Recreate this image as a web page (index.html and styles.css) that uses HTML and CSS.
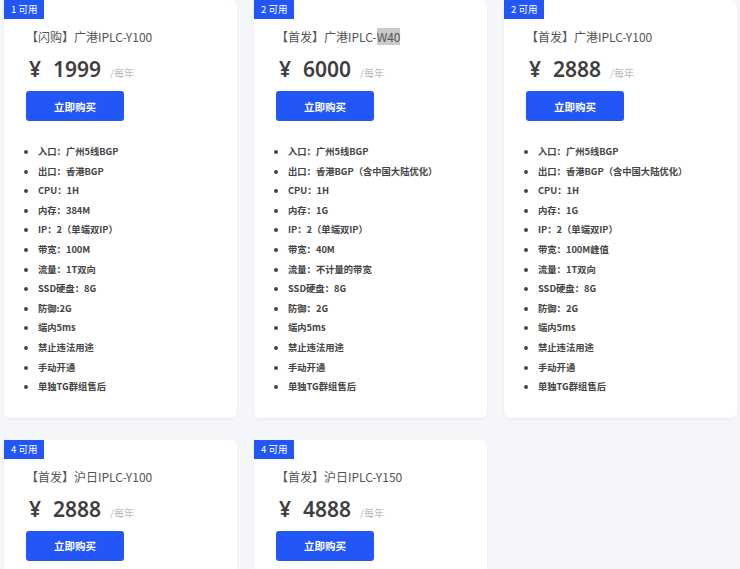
FILE: index.html
```html
<!DOCTYPE html>
<html lang="zh-CN">
<head>
    <meta charset="UTF-8">
    <meta name="viewport" content="width=device-width, initial-scale=1.0">
    <title>IPLC 套餐</title>
    <link rel="stylesheet" href="styles.css">
</head>
<body>

<!-- 套餐列表 -->
<div class="plans">

    <div class="card">
        <span class="badge">1 可用</span>
        <h3 class="plan-title">【闪购】广港IPLC-Y100</h3>
        <div class="price"><span class="yen">¥</span>1999<span class="period">/每年</span></div>
        <button class="buy-btn">立即购买</button>
        <ul class="specs">
            <li>入口：广州5线BGP</li>
            <li>出口：香港BGP</li>
            <li>CPU：1H</li>
            <li>内存：384M</li>
            <li>IP：2（单端双IP）</li>
            <li>带宽：100M</li>
            <li>流量：1T双向</li>
            <li>SSD硬盘：8G</li>
            <li>防御:2G</li>
            <li>端内5ms</li>
            <li>禁止违法用途</li>
            <li>手动开通</li>
            <li>单独TG群组售后</li>
        </ul>
    </div>

    <div class="card">
        <span class="badge">2 可用</span>
        <h3 class="plan-title">【首发】广港IPLC-<span class="selected">W40</span></h3>
        <div class="price"><span class="yen">¥</span>6000<span class="period">/每年</span></div>
        <button class="buy-btn">立即购买</button>
        <ul class="specs">
            <li>入口：广州5线BGP</li>
            <li>出口：香港BGP（含中国大陆优化）</li>
            <li>CPU：1H</li>
            <li>内存：1G</li>
            <li>IP：2（单端双IP）</li>
            <li>带宽：40M</li>
            <li>流量：不计量的带宽</li>
            <li>SSD硬盘：8G</li>
            <li>防御：2G</li>
            <li>端内5ms</li>
            <li>禁止违法用途</li>
            <li>手动开通</li>
            <li>单独TG群组售后</li>
        </ul>
    </div>

    <div class="card">
        <span class="badge">2 可用</span>
        <h3 class="plan-title">【首发】广港IPLC-Y100</h3>
        <div class="price"><span class="yen">¥</span>2888<span class="period">/每年</span></div>
        <button class="buy-btn">立即购买</button>
        <ul class="specs">
            <li>入口：广州5线BGP</li>
            <li>出口：香港BGP（含中国大陆优化）</li>
            <li>CPU：1H</li>
            <li>内存：1G</li>
            <li>IP：2（单端双IP）</li>
            <li>带宽：100M峰值</li>
            <li>流量：1T双向</li>
            <li>SSD硬盘：8G</li>
            <li>防御：2G</li>
            <li>端内5ms</li>
            <li>禁止违法用途</li>
            <li>手动开通</li>
            <li>单独TG群组售后</li>
        </ul>
    </div>

    <div class="card">
        <span class="badge">4 可用</span>
        <h3 class="plan-title">【首发】沪日IPLC-Y100</h3>
        <div class="price"><span class="yen">¥</span>2888<span class="period">/每年</span></div>
        <button class="buy-btn">立即购买</button>
        <ul class="specs">
            <li>入口：上海BGP</li>
            <li>出口：日本BGP</li>
            <li>CPU：1H</li>
            <li>内存：1G</li>
        </ul>
    </div>

    <div class="card">
        <span class="badge">4 可用</span>
        <h3 class="plan-title">【首发】沪日IPLC-Y150</h3>
        <div class="price"><span class="yen">¥</span>4888<span class="period">/每年</span></div>
        <button class="buy-btn">立即购买</button>
        <ul class="specs">
            <li>入口：上海BGP</li>
            <li>出口：日本BGP</li>
            <li>CPU：1H</li>
            <li>内存：1G</li>
        </ul>
    </div>

</div>

</body>
</html>
```

FILE: styles.css
```css
body {
    font-family: "Noto Sans CJK SC", sans-serif;
    background-color: #f5f6f9;
    color: #444;
    margin: 0;
    padding: 0;
}

.plans {
    display: grid;
    grid-template-columns: repeat(3, 233px);
    column-gap: 17px;
    row-gap: 22px;
    padding: 0 3px 0 4px;
}

.card {
    position: relative;
    background-color: #fff;
    border-radius: 6px;
    box-shadow: 0 1px 3px rgba(0, 0, 0, 0.05);
    padding: 29px 20px 21px 22px;
}

.badge {
    position: absolute;
    top: 0;
    left: 0;
    height: 19px;
    line-height: 19px;
    padding: 0 7px;
    background-color: #2356f6;
    color: white;
    font-size: 9.5px;
}

.plan-title {
    margin: 0;
    height: 16px;
    font-size: 12px;
    line-height: 16px;
    font-weight: normal;
    color: #555;
}

.selected {
    background-color: #c9c9c9;
}

.price {
    margin-top: 10px;
    height: 28px;
    font-family: "Noto Sans", "Noto Sans CJK SC", sans-serif;
    font-size: 21px;
    line-height: 28px;
    font-weight: 600;
    color: #3f3f3f;
    padding-left: 3px;
}

.yen {
    margin-right: 12px;
}

.period {
    margin-left: 9px;
    font-size: 10px;
    line-height: 1;
    font-weight: normal;
    color: #bbb;
    font-family: "Noto Sans CJK SC", sans-serif;
}

.buy-btn {
    display: block;
    margin-top: 8px;
    width: 98px;
    height: 30px;
    background-color: #2356f6;
    border: none;
    border-radius: 3px;
    color: white;
    font-size: 10.5px;
    font-weight: bold;
    font-family: "Noto Sans CJK SC", sans-serif;
    cursor: pointer;
}

.specs {
    margin: 21px 0 0 0;
    padding-left: 12px;
    font-size: 9.3px;
    line-height: 19.6px;
    font-weight: bold;
    color: #444;
}

.specs li {
    height: 19.6px;
}
```
